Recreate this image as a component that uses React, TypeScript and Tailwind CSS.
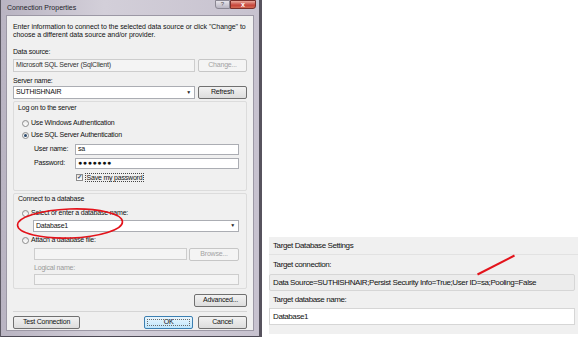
const font = { fontFamily: '"Liberation Sans", Arial, sans-serif' };

function Btn({ label, w, primary = false, disabled = false }: { label: string; w: string; primary?: boolean; disabled?: boolean }) {
  const base = 'h-[13px] flex items-center justify-center rounded-[2px] border text-[7px] tracking-[-0.2px]';
  if (disabled) {
    return <div className={`${base} ${w} border-[#c6c6c6] bg-[#f4f4f4] text-[#a3a3a3]`}>{label}</div>;
  }
  if (primary) {
    return (
      <div className={`${base} ${w} relative border-[#3c7fb1] bg-[linear-gradient(#eaf6fd,#bee6fd)] text-[#111]`}>
        <span className="absolute inset-[2px] border border-dotted border-[#6b6b6b]" />
        {label}
      </div>
    );
  }
  return <div className={`${base} ${w} border-[#707070] bg-[linear-gradient(#f2f2f2,#dddddd)] text-[#111]`}>{label}</div>;
}

function Input({ value = '', w, disabled = false, combo = false, h = 'h-[12px]', mono = false }: { value?: string; w: string; disabled?: boolean; combo?: boolean; h?: string; mono?: boolean }) {
  return (
    <div
      className={`${w} ${h} flex items-center border px-[2px] text-[7px] tracking-[-0.2px] ${
        disabled ? 'border-[#cdcdcd] bg-[#f4f4f4] text-[#333]' : 'border-[#abadb3] bg-white text-[#111]'
      }`}
    >
      <span className={`flex-1 ${mono ? 'tracking-[0.6px] font-bold' : ''}`}>{value}</span>
      {combo && <span className="text-[5px] text-[#222] pr-[1px]">▼</span>}
    </div>
  );
}

function Radio({ checked, label }: { checked: boolean; label: string }) {
  return (
    <div className="flex items-center h-[9px] gap-[2px] pl-[4px]">
      <span className="w-[7px] h-[7px] rounded-full border border-[#8c8c8c] bg-[linear-gradient(#e6e6e6,#ffffff)] flex items-center justify-center">
        {checked && <span className="w-[3px] h-[3px] rounded-full bg-[#2b4a6d]" />}
      </span>
      <span className="text-[7px] tracking-[-0.2px] text-[#111]">{label}</span>
    </div>
  );
}

function Dialog() {
  return (
    <div className="w-[262px] h-[337px] flex flex-col bg-[linear-gradient(90deg,#b9b4c2,#d3cfd9_40%,#c7c2cf)] border-l border-r-[3px] border-l-[#5b5862] border-r-[#57535e]">
      {/* title bar */}
      <div className="h-[15px] flex items-start relative">
        <span className="pl-[6px] pt-[3px] text-[7px] text-[#1e1e2a]">Connection Properties</span>
        <div className="ml-auto mr-[3px] flex">
          <div className="w-[15px] h-[9px] rounded-bl-[3px] border border-[#8a8793] bg-[linear-gradient(#e6e4ea,#b9b5c2)] text-[6px] leading-[7px] text-center text-[#555]">?</div>
          <div className="w-[26px] h-[9px] rounded-br-[3px] border border-[#7a2f2a] bg-[linear-gradient(#e9a99c,#c7453a_60%,#d26a54)] text-[7px] leading-[7px] text-center font-bold text-white">x</div>
        </div>
      </div>

      {/* client area */}
      <div className="mx-[5px] h-[316px] border border-[#9c98a5] bg-[#f0f0f0] px-[6px] flex flex-col text-[7px] tracking-[-0.2px] text-[#111]">
        <p className="mt-[7px] leading-[7.5px] tracking-[-0.05px]">
          Enter information to connect to the selected data source or click "Change" to choose a different data source and/or provider.
        </p>
        <div className="mt-[10px] h-[8px] leading-[8px]">Data source:</div>
        <div className="mt-[3px] flex justify-between">
          <Input value="Microsoft SQL Server (SqlClient)" w="w-[182px]" disabled h="h-[13px]" />
          <Btn label="Change..." w="w-[49px]" disabled />
        </div>
        <div className="mt-[5px] h-[8px] leading-[8px]">Server name:</div>
        <div className="mt-[1px] flex justify-between">
          <Input value="SUTHISHNAIR" w="w-[182px]" combo h="h-[13px]" />
          <Btn label="Refresh" w="w-[49px]" />
        </div>

        {/* log on group */}
        <div className="mt-[2px] h-[90px] rounded-[2px] border border-[#dcdcdc] flex flex-col pl-[4px] pr-[7px]">
          <div className="mt-[2px] h-[8px] leading-[8px]">Log on to the server</div>
          <div className="mt-[7px]"><Radio checked={false} label="Use Windows Authentication" /></div>
          <div className="mt-[3px]"><Radio checked label="Use SQL Server Authentication" /></div>
          <div className="mt-[3.5px] flex items-center pl-[16px]">
            <span className="w-[41px]">User name:</span>
            <Input value="sa" w="flex-1" h="h-[11px]" />
          </div>
          <div className="mt-[3.5px] flex items-center pl-[16px]">
            <span className="w-[41px]">Password:</span>
            <Input value="●●●●●●●" w="flex-1" h="h-[11px]" mono />
          </div>
          <div className="mt-[3.5px] flex items-center pl-[58px] gap-[2px] h-[9px]">
            <span className="w-[7px] h-[7px] border border-[#8c8c8c] bg-[linear-gradient(#e3e3e3,#ffffff)] flex items-center justify-center text-[6px] leading-[6px] text-[#2b4a6d] font-bold">✓</span>
            <span className="border border-dotted border-[#444] leading-[7px] px-[0.5px]">Save my password</span>
          </div>
        </div>

        {/* connect group */}
        <div className="mt-[2px] h-[96px] rounded-[2px] border border-[#dcdcdc] flex flex-col pl-[4px] pr-[7px] relative">
          <div className="mt-[1px] h-[8px] leading-[8px]">Connect to a database</div>
          <div className="mt-[6px]"><Radio checked={false} label="Select or enter a database name:" /></div>
          <div className="mt-[2px] pl-[15px]">
            <Input value="Database1" w="w-full" combo h="h-[12px]" />
          </div>
          <div className="mt-[4px]"><Radio checked={false} label="Attach a database file:" /></div>
          <div className="mt-[3px] pl-[16px] flex justify-between">
            <Input w="w-[153px]" disabled h="h-[11.5px]" />
            <Btn label="Browse..." w="w-[50px]" disabled />
          </div>
          <div className="mt-[3px] pl-[16px] h-[8px] leading-[8px] text-[#9a9a9a]">Logical name:</div>
          <div className="mt-[1.5px] pl-[16px]">
            <Input w="w-full" disabled h="h-[11px]" />
          </div>
          {/* red highlight ellipse */}
          <svg className="absolute left-[2px] top-[13px]" width="110" height="34" viewBox="0 0 110 34">
            <ellipse cx="54" cy="16.5" rx="52.5" ry="14.5" fill="none" stroke="#e3131b" strokeWidth="1.6" transform="rotate(-2 54 16.5)" />
          </svg>
        </div>

        <div className="mt-[5px] flex justify-end">
          <Btn label="Advanced..." w="w-[53px]" />
        </div>
        <div className="mt-[3.5px] h-px bg-[#d5d5d5]" />
        <div className="mt-[4.5px] flex">
          <Btn label="Test Connection" w="w-[67px]" />
          <div className="ml-auto flex gap-[5px]">
            <Btn label="OK" w="w-[49px]" primary />
            <Btn label="Cancel" w="w-[49px]" />
          </div>
        </div>
      </div>
      <div className="flex-1 border-b border-[#4d4a55]" />
    </div>
  );
}

function TargetPanel() {
  return (
    <div className="ml-[7px] mt-[237px] flex-1 h-[97px] bg-[#f0f0f0] flex flex-col text-[8px] tracking-[-0.4px] text-[#111] relative">
      <div className="h-[18px] border-b border-[#e2e2e2] pl-[4px] flex items-center">Target Database Settings</div>
      <div className="mt-[5px] pl-[4px] h-[9px] leading-[9px]">Target connection:</div>
      <div className="mt-[5px] mr-[3px] h-[17px] rounded-[2px] border border-[#d6d6d6] bg-[#ececec] pl-[3px] flex items-center">
        Data Source=SUTHISHNAIR;Persist Security Info=True;User ID=sa;Pooling=False
      </div>
      <div className="mt-[4px] pl-[4px] h-[9px] leading-[9px]">Target database name:</div>
      <div className="mt-[4px] mr-[3px] h-[17px] border border-[#d6d6d6] bg-white pl-[3px] flex items-center">Database1</div>
      <svg className="absolute left-[207px] top-[17px]" width="40" height="22" viewBox="0 0 40 22">
        <line x1="1.5" y1="20.5" x2="38.5" y2="1.5" stroke="#e3131b" strokeWidth="2" />
      </svg>
    </div>
  );
}

export default function App() {
  return (
    <div className="w-[578px] h-[337px] bg-white flex overflow-hidden" style={font}>
      <Dialog />
      <TargetPanel />
    </div>
  );
}
